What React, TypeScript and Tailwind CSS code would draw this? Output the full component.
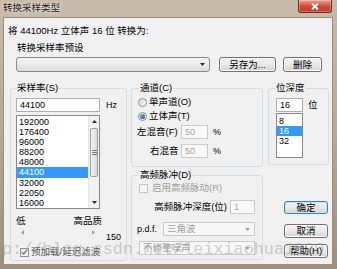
import type { ReactNode } from 'react';
import clsx from 'clsx';

const ui = "font-['Liberation_Sans','Noto_Sans_CJK_SC',sans-serif]";

function Caret({ dir, gray, small }: { dir: 'up' | 'down' | 'left' | 'right'; gray?: boolean; small?: boolean }) {
    const fill = gray ? '#a3a3a3' : '#2b2b2b';
    const a = small ? 5 : 7;
    const b = small ? 3 : 4;
    if (dir === 'down')
        return (
            <svg width={a} height={b} viewBox={`0 0 ${a} ${b}`}>
                <path d={`M0 0H${a}L${a / 2} ${b}z`} fill={fill} />
            </svg>
        );
    if (dir === 'up')
        return (
            <svg width={a} height={b} viewBox={`0 0 ${a} ${b}`}>
                <path d={`M0 ${b}H${a}L${a / 2} 0z`} fill={fill} />
            </svg>
        );
    if (dir === 'left')
        return (
            <svg width={b} height={a} viewBox={`0 0 ${b} ${a}`}>
                <path d={`M${b} 0V${a}L0 ${a / 2}z`} fill={fill} />
            </svg>
        );
    return (
        <svg width={b} height={a} viewBox={`0 0 ${b} ${a}`}>
            <path d={`M0 0V${a}L${b} ${a / 2}z`} fill={fill} />
        </svg>
    );
}

function Btn({ children, className, primary }: { children: ReactNode; className?: string; primary?: boolean }) {
    return (
        <div
            className={clsx(
                'flex shrink-0 items-center justify-center rounded-[3px] border bg-linear-to-b from-[#f4f4f4] via-[#e8e8e8] to-[#d3d3d3] text-[9.5px] leading-none',
                primary
                    ? 'border-[#3c7fb1] shadow-[inset_0_0_0_1px_#bfe6fa]'
                    : 'border-[#707070] shadow-[inset_0_0_0_1px_#fafafa]',
                className,
            )}
        >
            {children}
        </div>
    );
}

function Edit({ value, className, disabled }: { value: string; className?: string; disabled?: boolean }) {
    return (
        <div
            className={clsx(
                'flex shrink-0 items-center border px-[3px] text-[9px] leading-none',
                disabled ? 'border-[#cbcbcb] bg-[#f8f8f8] text-[#a2a2a2]' : 'border-[#abadb3] bg-white',
                className,
            )}
        >
            {value}
        </div>
    );
}

function DropDown({ text, className, disabled }: { text?: string; className?: string; disabled?: boolean }) {
    return (
        <div
            className={clsx(
                'flex shrink-0 items-center justify-between border pl-[3px] pr-[4px]',
                disabled
                    ? 'border-[#c8c8c8] bg-[#f7f7f7] text-[#a2a2a2]'
                    : 'rounded-[3px] border-[#8a8a8a] bg-linear-to-b from-[#f6f6f6] to-[#dcdcdc]',
                className,
            )}
        >
            <span className="text-[9.5px] leading-none">{text}</span>
            <Caret dir="down" gray={disabled} small />
        </div>
    );
}

function Check({ checked, disabled }: { checked?: boolean; disabled?: boolean }) {
    return (
        <div
            className={clsx(
                'flex size-[9px] shrink-0 items-center justify-center border',
                disabled ? 'border-[#c6c6c6] bg-[#f6f6f6]' : 'border-[#8e8f8f] bg-linear-to-br from-[#e4e4e4] to-white',
            )}
        >
            {checked && (
                <svg width="7" height="6" viewBox="0 0 7 6">
                    <path d="M0.8 3.1 2.7 5 6.2 0.8" fill="none" stroke="#6b7280" strokeWidth="1.3" />
                </svg>
            )}
        </div>
    );
}

function Radio({ checked, children }: { checked?: boolean; children: ReactNode }) {
    return (
        <div className="flex h-[12px] items-center">
            <div className="ml-[2px] flex size-[9px] shrink-0 items-center justify-center rounded-full border border-[#8e8f8f] bg-linear-to-br from-[#d8d8d8] to-[#fbfbfb]">
                {checked && <div className="size-[5px] rounded-full bg-linear-to-br from-[#7fb8e6] to-[#1d4f8a]" />}
            </div>
            <span className="ml-[2px]">{children}</span>
        </div>
    );
}

function ScrollBar() {
    return (
        <div className="flex w-[11px] shrink-0 flex-col border-l border-[#e4e4e4] bg-[#f1f1f1]">
            <div className="flex h-[11px] items-center justify-center">
                <Caret dir="up" small />
            </div>
            <div className="mx-[1px] mt-[1px] flex h-[49px] flex-col items-center justify-center gap-[1px] rounded-[2px] border border-[#9e9e9e] bg-linear-to-r from-[#f4f4f4] to-[#d9d9d9]">
                <div className="h-px w-[5px] bg-[#777]" />
                <div className="h-px w-[5px] bg-[#777]" />
                <div className="h-px w-[5px] bg-[#777]" />
            </div>
            <div className="flex-1" />
            <div className="flex h-[11px] items-center justify-center">
                <Caret dir="down" small />
            </div>
        </div>
    );
}

function List({ items, sel, className, scroll }: { items: string[]; sel: string; className?: string; scroll?: boolean }) {
    return (
        <div className={clsx('flex shrink-0 overflow-hidden border border-[#828790] bg-white', className)}>
            <div className={clsx('flex-1 text-[9px]', scroll ? 'pt-[1px] leading-[10.1px]' : 'pt-[2px] leading-[10px]')}>
                {items.map((v) => (
                    <div key={v} className={clsx('pl-[2px]', v === sel && 'bg-[#3399ff] text-white')}>
                        {v}
                    </div>
                ))}
            </div>
            {scroll && <ScrollBar />}
        </div>
    );
}

export default function App() {
    return (
        <div className={clsx(ui, 'relative flex h-[269px] w-[337px] flex-col overflow-hidden bg-linear-to-b from-[#c8bba9] via-[#b9a891] to-[#9f8e78] text-black')}>
            {/* title bar */}
            <div className="flex h-[18px] shrink-0 items-start justify-between">
                <span className="pl-[3px] pt-[2px] text-[9.5px] leading-[11px] text-[#1e1e1e] [text-shadow:0_0_3px_#efe7dc,0_0_5px_#efe7dc]">
                    转换采样类型
                </span>
                <div className="mr-[5px] flex h-[13px] w-[34px] items-center justify-center rounded-b-[3px] border border-t-0 border-[#6a2a20] bg-linear-to-b from-[#e9a094] via-[#d04a3c] to-[#c23a2a] shadow-[inset_0_0_0_1px_rgba(255,255,255,0.3)]">
                    <svg width="8" height="7" viewBox="0 0 8 7">
                        <path d="M1 0.5 7 6.5M7 0.5 1 6.5" stroke="#fff" strokeWidth="1.8" />
                    </svg>
                </div>
            </div>

            {/* client */}
            <div className="ml-[4px] mr-[5px] h-[246px] shrink-0 bg-[#f0f0f0] text-[9.5px] leading-[12px] shadow-[0_0_0_1px_#9b8e7c]">
                <div className="pl-[4px] pt-[7px]">将 44100Hz 立体声 16 位 转换为:</div>
                <div className="ml-[13px] mt-[5px]">转换采样率预设</div>
                <div className="ml-[12px] mt-[3px] flex h-[15px] items-center">
                    <DropDown className="h-[15px] w-[194px]" />
                    <Btn className="ml-[9px] h-[15px] w-[57px]">另存为...</Btn>
                    <Btn className="ml-[7px] h-[15px] w-[39px]">删除</Btn>
                </div>

                <div className="ml-[6px] mt-[10px] flex items-start">
                    {/* sample rate */}
                    <fieldset className="w-[117px] rounded-[3px] border border-[#d5dbe0] pb-[2px] pl-[5px]">
                        <legend className="px-[1px] leading-[12px]">采样率(S)</legend>
                        <div className="mt-[4px] flex h-[14px] items-center">
                            <Edit value="44100" className="h-[14px] w-[84px]" />
                            <span className="ml-[6px] text-[9px]">Hz</span>
                        </div>
                        <List
                            className="mt-[3px] h-[94px] w-[84px]"
                            items={['192000', '176400', '96000', '88200', '48000', '44100', '32000', '22050', '16000']}
                            sel="44100"
                            scroll
                        />
                        <div className="mt-[6px] flex h-[12px] w-[86px] justify-between">
                            <span>低</span>
                            <span>高品质</span>
                        </div>
                        <div className="flex items-start">
                            <div className="flex h-[10px] w-[84px] items-center justify-between px-[5px]">
                                <Caret dir="left" gray small />
                                <Caret dir="right" gray small />
                            </div>
                            <span className="ml-[6px] mt-[5px] text-[9px] leading-[10px]">150</span>
                        </div>
                        <div className="mt-[4px] flex h-[12px] items-center">
                            <div className="ml-[4px]">
                                <Check checked />
                            </div>
                            <span className="ml-[2px] text-[#555]">预加载/延迟滤波</span>
                        </div>
                    </fieldset>

                    {/* channels + dither */}
                    <div className="ml-[4px] flex w-[132px] flex-col">
                        <fieldset className="rounded-[3px] border border-[#d5dbe0] pb-[8px] pl-[4px]">
                            <legend className="ml-[3px] px-[1px] leading-[12px]">通道(C)</legend>
                            <div className="mt-[2px]">
                                <Radio>单声道(O)</Radio>
                            </div>
                            <div className="mt-[2px]">
                                <Radio checked>立体声(T)</Radio>
                            </div>
                            <div className="mt-[3px] flex h-[14px] items-center">
                                <span className="w-[45px] shrink-0 whitespace-nowrap pl-[1px]">左混音(F)</span>
                                <Edit value="50" disabled className="h-[14px] w-[27px]" />
                                <span className="ml-[5px] text-[9px]">%</span>
                            </div>
                            <div className="mt-[5px] flex h-[14px] items-center">
                                <span className="w-[45px] shrink-0 whitespace-nowrap pl-[14px]">右混音</span>
                                <Edit value="50" disabled className="h-[14px] w-[27px]" />
                                <span className="ml-[5px] text-[9px]">%</span>
                            </div>
                        </fieldset>

                        <fieldset className="mt-[2px] rounded-[3px] border border-[#d5dbe0] pb-[4px] pl-[4px] pr-[7px]">
                            <legend className="ml-[3px] px-[1px] leading-[12px]">高频脉冲(D)</legend>
                            <div className="mt-[1px] flex h-[12px] items-center text-[#a0a0a0]">
                                <div className="ml-[3px]">
                                    <Check disabled />
                                </div>
                                <span className="ml-[4px]">启用高频脉动(R)</span>
                            </div>
                            <div className="mt-[6px] flex h-[14px] items-center justify-end">
                                <span>高频脉冲深度(位)</span>
                                <Edit value="1" disabled className="ml-[3px] h-[14px] w-[25px]" />
                            </div>
                            <div className="mt-[8px] flex h-[14px] items-center">
                                <span className="ml-[1px] text-[9px]">p.d.f.</span>
                                <DropDown text="三角波" disabled className="ml-[6px] h-[14px] flex-1" />
                            </div>
                            <DropDown text="不修整噪声" disabled className="ml-[3px] mt-[5px] h-[14px]" />
                        </fieldset>
                    </div>

                    {/* bit depth + buttons */}
                    <div className="ml-[5px] flex w-[61px] flex-col">
                        <fieldset className="rounded-[3px] border border-[#d5dbe0] pb-[6px] pl-[6px]">
                            <legend className="px-[1px] leading-[12px]">位深度</legend>
                            <div className="mt-[4px] flex h-[14px] items-center">
                                <Edit value="16" className="ml-[1px] h-[14px] w-[27px]" />
                                <span className="ml-[5px]">位</span>
                            </div>
                            <List className="ml-[1px] mt-[1px] h-[45px] w-[27px]" items={['8', '16', '32']} sel="16" />
                        </fieldset>
                        <Btn primary className="mr-[1px] mt-[36px] h-[13px] w-[44px] self-end">
                            确定
                        </Btn>
                        <Btn className="mr-[1px] mt-[10px] h-[14px] w-[44px] self-end">取消</Btn>
                        <Btn className="mr-[1px] mt-[6px] h-[14px] w-[44px] self-end">帮助(H)</Btn>
                    </div>
                </div>
            </div>

            {/* blog watermark baked into the screenshot */}
            <div className="pointer-events-none absolute left-[2px] top-[241px] whitespace-nowrap font-['Liberation_Mono',monospace] text-[16.8px] leading-[17px] text-[#8c8c8c]/40">
                p://blog.csdn.net/leixiaohua1020
            </div>
        </div>
    );
}
